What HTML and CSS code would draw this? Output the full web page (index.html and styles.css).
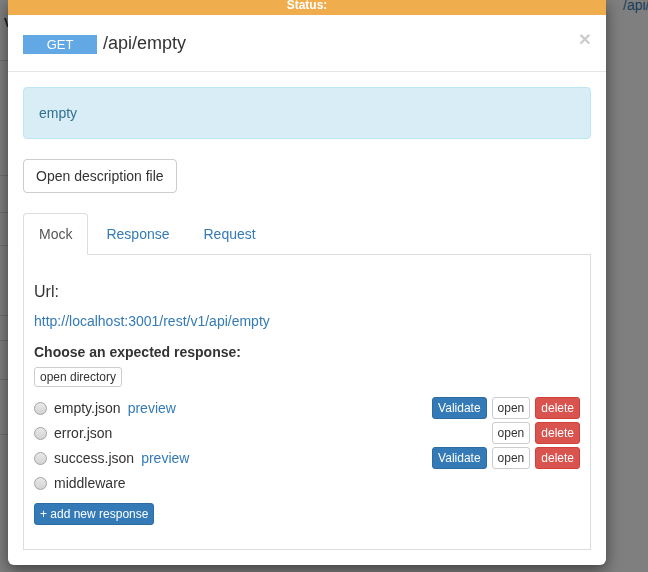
FILE: index.html
```html
<!DOCTYPE html>
<html>
<head>
<meta charset="utf-8">
<link rel="stylesheet" href="styles.css">
</head>
<body>
<div class="under">
  <div class="u-row u-top">
    <div class="u-link">/api/empty</div>
    <div class="u-v">V</div>
  </div>
  <div class="u-row u-a"></div>
  <div class="u-row u-b"></div>
  <div class="u-row u-c"></div>
  <div class="u-row u-d"></div>
  <div class="u-row u-e"></div>
  <div class="u-row u-f"></div>
  <div class="u-row u-g"></div>
</div>
<div class="backdrop"></div>
<div class="modal">
  <div class="status">Status:</div>
  <div class="modal-header">
    <span class="method">GET</span>
    <span class="title">/api/empty</span>
    <button class="close" type="button">×</button>
  </div>
  <div class="modal-body">
    <div class="alert">empty</div>
    <button class="btn btn-default" type="button">Open description file</button>
    <ul class="tabs">
      <li><a class="tab active">Mock</a></li>
      <li><a class="tab">Response</a></li>
      <li><a class="tab">Request</a></li>
    </ul>
    <div class="panel">
      <div class="url-label">Url:</div>
      <a class="url-link">http://localhost:3001/rest/v1/api/empty</a>
      <div class="choose">Choose an expected response:</div>
      <button class="btn-xs btn-white dir-btn" type="button">open directory</button>
      <div class="responses">
        <div class="resp-row">
          <span class="radio"></span>
          <span class="fname">empty.json</span><a class="preview">preview</a>
          <div class="actions">
            <button class="btn-xs btn-blue" type="button">Validate</button>
            <button class="btn-xs btn-white" type="button">open</button>
            <button class="btn-xs btn-red" type="button">delete</button>
          </div>
        </div>
        <div class="resp-row">
          <span class="radio"></span>
          <span class="fname">error.json</span>
          <div class="actions">
            <button class="btn-xs btn-white" type="button">open</button>
            <button class="btn-xs btn-red" type="button">delete</button>
          </div>
        </div>
        <div class="resp-row">
          <span class="radio"></span>
          <span class="fname">success.json</span><a class="preview">preview</a>
          <div class="actions">
            <button class="btn-xs btn-blue" type="button">Validate</button>
            <button class="btn-xs btn-white" type="button">open</button>
            <button class="btn-xs btn-red" type="button">delete</button>
          </div>
        </div>
        <div class="resp-row">
          <span class="radio"></span>
          <span class="fname">middleware</span>
        </div>
      </div>
      <button class="btn-xs btn-blue add-btn" type="button">+ add new response</button>
    </div>
  </div>
</div>
</body>
</html>
```
FILE: styles.css
```css
* { box-sizing: border-box; }
html, body { margin: 0; padding: 0; }
body {
  font-family: "Liberation Sans", Arial, sans-serif;
  font-size: 14px;
  color: #333;
  background: #fff;
  width: 648px;
  height: 572px;
  overflow: hidden;
}

/* underlying page */
.under { display: flex; flex-direction: column; }
.u-row { width: 300px; border-bottom: 1px solid #ddd; }
.u-top { height: 61px; }
.u-a { height: 115px; }
.u-b { height: 37px; }
.u-c { height: 33px; }
.u-d { height: 70px; }
.u-e { height: 25px; }
.u-f { height: 39px; }
.u-g { height: 55px; }
.u-link {
  margin-left: 623px;
  color: #337ab7;
  font-size: 14px;
  line-height: 10px;
  white-space: nowrap;
}
.u-v {
  margin-left: 4px;
  margin-top: 6px;
  font-weight: bold;
  font-size: 12px;
  color: #333;
}

.backdrop {
  position: fixed;
  inset: 0;
  background: rgba(0, 0, 0, 0.5);
}

/* modal */
.modal {
  position: absolute;
  left: 8px;
  top: 0;
  width: 598px;
  background: #fff;
  border-radius: 0 0 6px 6px;
  box-shadow: 0 5px 15px rgba(0, 0, 0, 0.5);
}
.status {
  height: 15px;
  background: #f0ad4e;
  color: #fff;
  font-weight: bold;
  font-size: 12px;
  line-height: 11px;
  text-align: center;
}
.modal-header {
  display: flex;
  align-items: flex-start;
  padding: 15px;
  border-bottom: 1px solid #e5e5e5;
  height: 57px;
}
.method {
  width: 74px;
  height: 19px;
  margin-top: 5px;
  background: #62a8e5;
  color: #fff;
  font-size: 13px;
  line-height: 19px;
  text-align: center;
}
.title {
  margin-left: 6px;
  font-size: 18px;
  line-height: 26px;
  color: #333;
}
.close {
  margin-left: auto;
  margin-top: -2px;
  padding: 0;
  border: 0;
  background: none;
  font-family: "Liberation Sans", Arial, sans-serif;
  font-size: 21px;
  font-weight: bold;
  line-height: 1;
  color: #000;
  opacity: 0.2;
}

.modal-body {
  padding: 15px;
  display: flex;
  flex-direction: column;
  align-items: flex-start;
}
.alert {
  align-self: stretch;
  padding: 15px;
  border: 1px solid #bce8f1;
  background: #d9edf7;
  color: #31708f;
  border-radius: 4px;
  line-height: 20px;
  margin-bottom: 20px;
}
.btn {
  font-family: "Liberation Sans", Arial, sans-serif;
  font-size: 14px;
  line-height: 20px;
  padding: 6px 12px;
  border: 1px solid #ccc;
  border-radius: 4px;
  background: #fff;
  color: #333;
  margin-bottom: 20px;
}

.tabs {
  align-self: stretch;
  display: flex;
  list-style: none;
  margin: 0;
  padding: 0;
  border-bottom: 1px solid #ddd;
}
.tabs li { margin-bottom: -1px; }
.tab {
  display: block;
  padding: 10px 15px;
  line-height: 20px;
  margin-right: 2px;
  border: 1px solid transparent;
  border-radius: 4px 4px 0 0;
  color: #337ab7;
}
.tab.active {
  color: #555;
  background: #fff;
  border-color: #ddd #ddd transparent;
}

.panel {
  align-self: stretch;
  border: 1px solid #ddd;
  border-top: 0;
  padding: 10px 10px 10px;
  display: flex;
  flex-direction: column;
  align-items: flex-start;
}
.url-label {
  margin-top: 17px;
  font-size: 16px;
  line-height: 20px;
}
.url-link {
  margin-top: 9px;
  line-height: 20px;
  color: #337ab7;
}
.choose {
  margin-top: 11px;
  font-weight: bold;
  line-height: 20px;
}
.btn-xs {
  font-family: "Liberation Sans", Arial, sans-serif;
  font-size: 12px;
  line-height: 18px;
  padding: 1px 5px;
  border: 1px solid transparent;
  border-radius: 3px;
  white-space: nowrap;
}
.btn-white { background: #fff; border-color: #ccc; color: #333; }
.btn-blue { background: #337ab7; border-color: #2e6da4; color: #fff; }
.btn-red { background: #d9534f; border-color: #d43f3a; color: #fff; }
.dir-btn { margin-top: 5px; line-height: 16px; }

.responses {
  align-self: stretch;
  margin-top: 10px;
  display: flex;
  flex-direction: column;
  gap: 3px;
}
.resp-row {
  display: flex;
  align-items: center;
  height: 22px;
}
.radio {
  width: 13px;
  height: 13px;
  border-radius: 50%;
  border: 1px solid #a3a3a3;
  background: linear-gradient(#e9e9e9, #d3d3d3);
  margin-right: 7px;
}
.preview { margin-left: 7px; color: #337ab7; }
.actions {
  margin-left: auto;
  display: flex;
  gap: 5px;
}
.add-btn { margin-top: 9px; margin-bottom: 14px; }
```
